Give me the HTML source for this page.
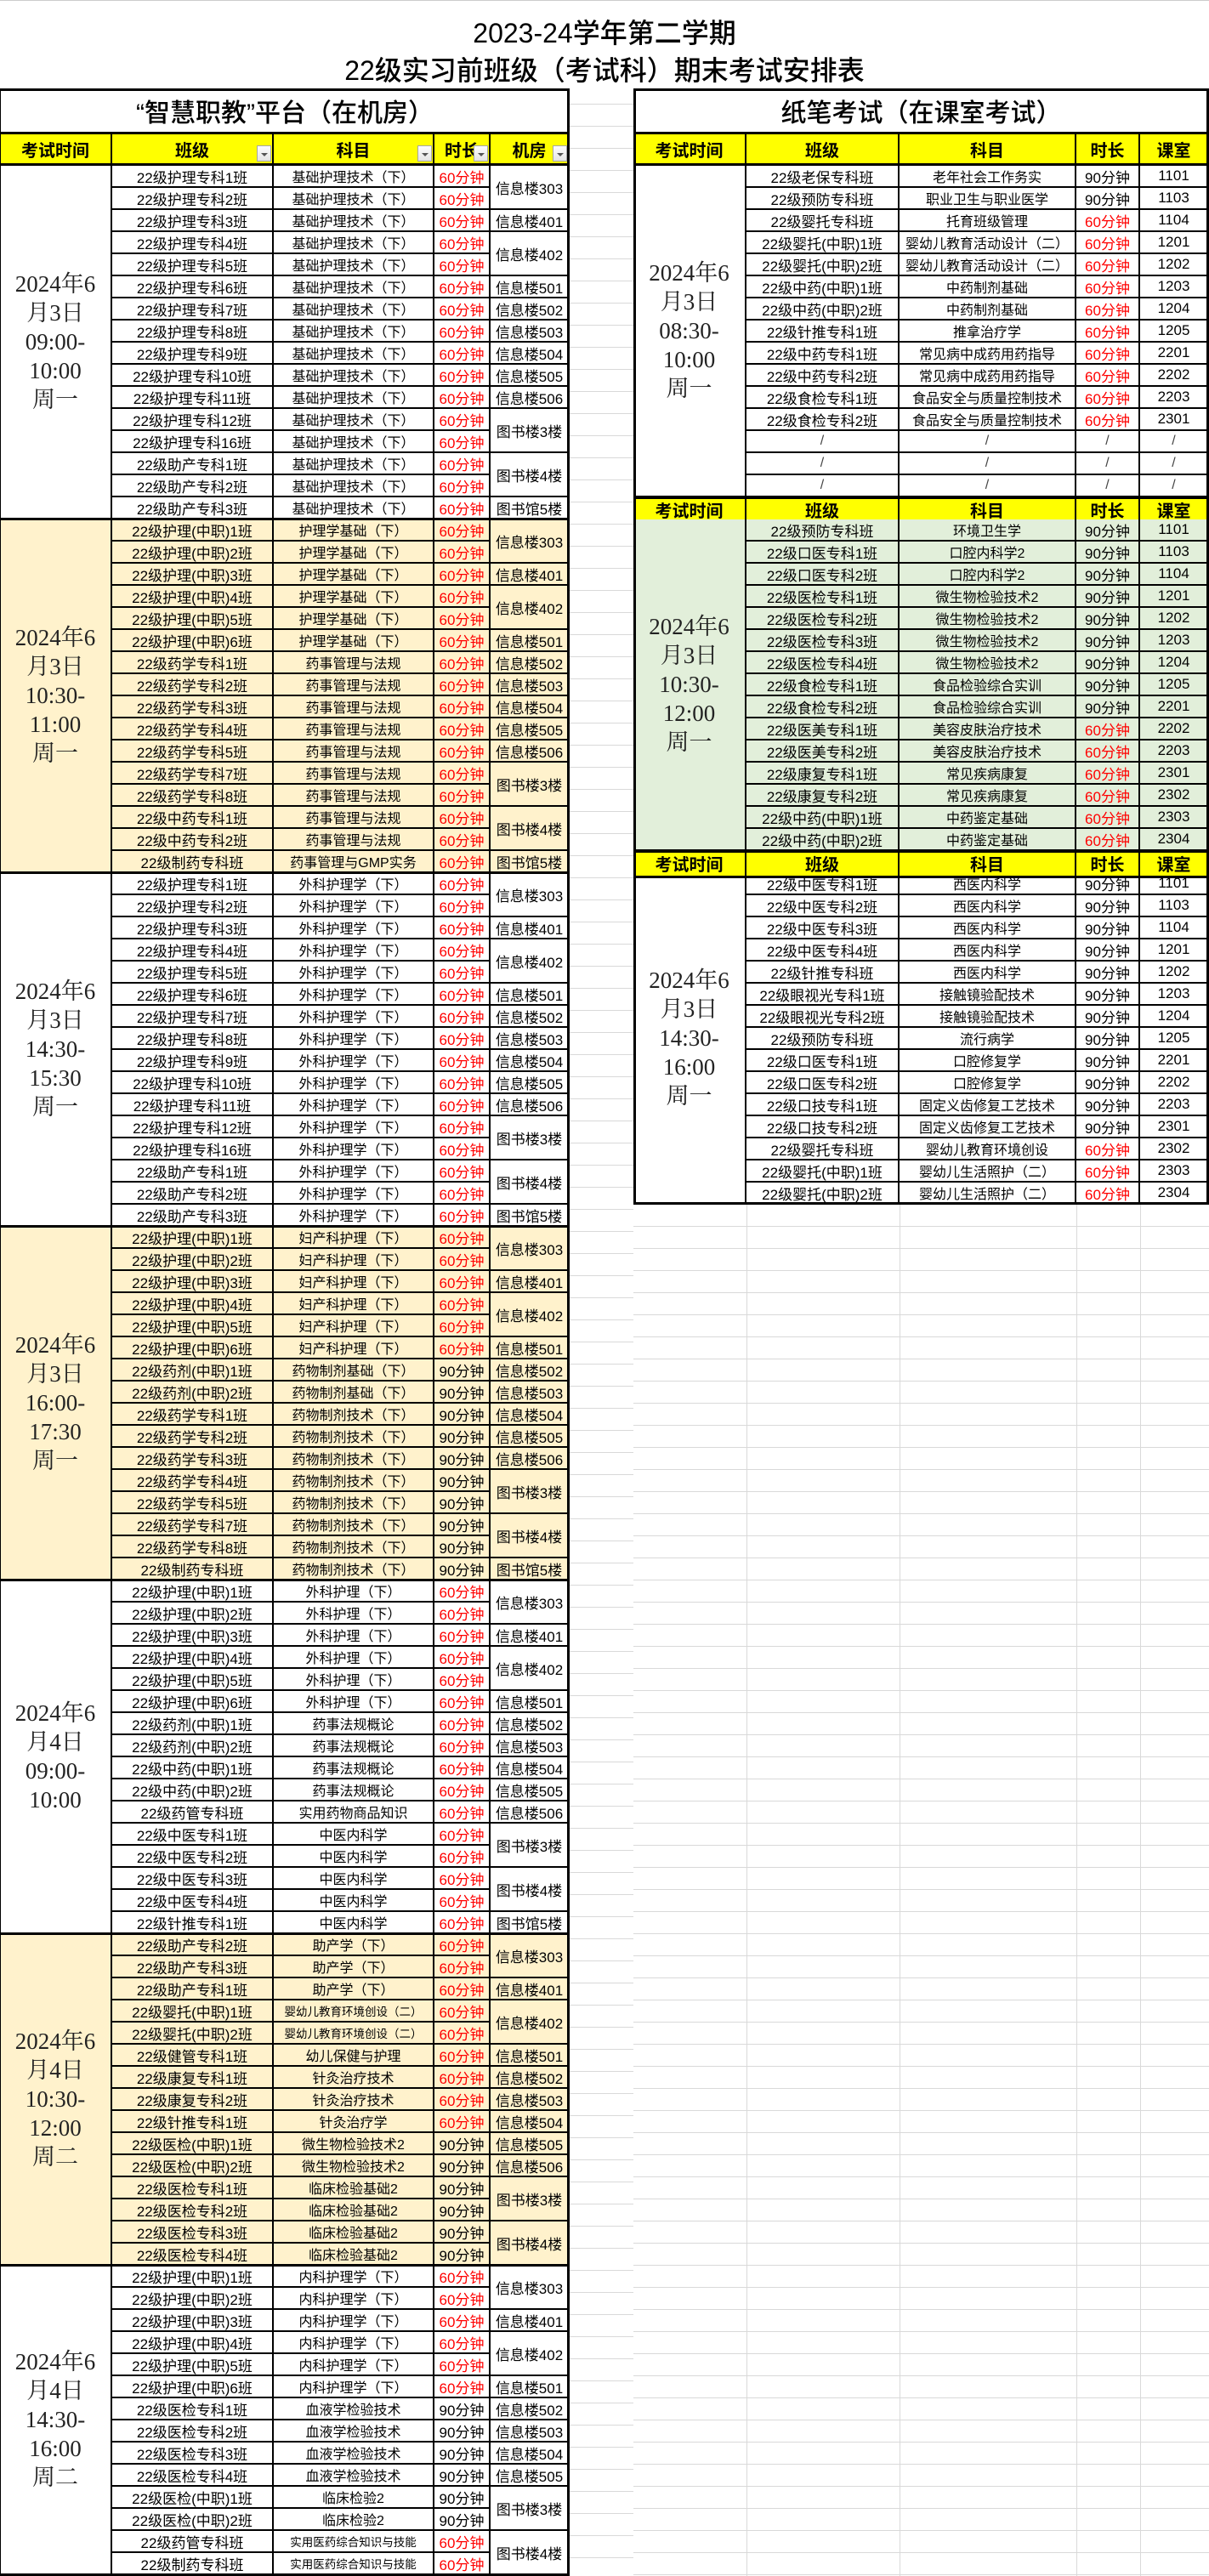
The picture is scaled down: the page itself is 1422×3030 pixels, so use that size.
<!DOCTYPE html>
<html><head><meta charset="utf-8">
<style>
html,body{margin:0;padding:0;}
body{width:1422px;height:3030px;position:relative;overflow:hidden;background:#fff;font-family:"Liberation Sans","Noto Sans CJK SC",sans-serif;color:#000;}
.bgL{position:absolute;left:670px;top:104px;width:75px;height:2926px;background-image:repeating-linear-gradient(to bottom,transparent 0,transparent 25px,#d9d9d9 25px,#d9d9d9 26px);background-position:0 -7px;}
.bgR{position:absolute;left:745px;top:1417px;width:677px;height:1613px;background-image:repeating-linear-gradient(to bottom,transparent 0,transparent 25px,#d9d9d9 25px,#d9d9d9 26px);}
.vl{position:absolute;top:1417px;height:1613px;width:1px;background:#d9d9d9;}
.t1{position:absolute;left:0;width:1422px;text-align:center;font-size:32px;font-weight:500;}
.g{position:absolute;display:grid;grid-auto-rows:26px;}
.L{left:0;width:670px;grid-template-columns:132px 190px 189px 66px 93px;}
.R{left:745px;width:677px;grid-template-columns:133px 180px 208px 75px 81px;}
.g>div{box-sizing:border-box;border-right:2px solid #000;border-bottom:2px solid #000;display:flex;align-items:center;justify-content:center;font-size:17px;white-space:nowrap;overflow:hidden;}
.g>div.s{font-size:16px;}
.g>div.ss{font-size:13.5px;}
.g>div.r{color:#f00;}
.g>div.d{font-family:"Liberation Serif","Noto Serif CJK SC",serif;font-size:27px;line-height:34px;text-align:center;color:#222;}
.g>div.x{color:#444;font-size:16px;}
.s2{grid-row:span 2;}
.c{background:#FFF2CC;}
.gr{background:#E2EFDA;}
.hd{position:absolute;display:grid;height:37px;}
.hd>div{box-sizing:border-box;background:#ff0;border-right:2px solid #000;border-bottom:3px solid #000;display:flex;align-items:center;justify-content:center;font-size:20px;font-weight:bold;position:relative;}
.fb{position:absolute;right:1px;bottom:2px;width:17px;height:19px;box-sizing:border-box;border:1px solid #a6a6a6;background:linear-gradient(#fdfdfd,#e4e4e4);}
.fb::after{content:"";position:absolute;left:4px;top:8px;border-left:4px solid transparent;border-right:4px solid transparent;border-top:4px solid #555;}
.ttl{position:absolute;top:104px;height:54px;box-sizing:border-box;border-bottom:3px solid #000;display:flex;align-items:center;justify-content:center;font-size:30px;font-weight:500;background:#fff;}
.frame{position:absolute;box-sizing:border-box;border:3px solid #000;pointer-events:none;}
.hl{position:absolute;height:3px;background:#000;}
</style></head><body>
<div class="bgL"></div>
<div class="bgR"></div>
<div class="vl" style="left:878px"></div><div class="vl" style="left:1058px"></div><div class="vl" style="left:1266px"></div><div class="vl" style="left:1341px"></div>
<div style="position:absolute;left:0;top:0;width:1422px;height:1px;background:#ccc"></div>

<div class="t1" style="top:14px;">2023-24学年第二学期</div>
<div class="t1" style="top:58px;">22级实习前班级（考试科）期末考试安排表</div>

<!-- LEFT TABLE -->
<div class="ttl" style="left:0;width:670px;">“智慧职教”平台（在机房）</div>
<div class="hd" style="left:0;top:158px;width:670px;grid-template-columns:132px 190px 189px 66px 93px;">
<div>考试时间</div><div>班级<span class="fb"></span></div><div>科目<span class="fb"></span></div><div style="justify-content:flex-start;padding-left:12px">时长<span class="fb"></span></div><div>机房<span class="fb"></span></div>
</div>

<!-- G1 -->
<div class="g L" style="top:195px;">
<div class="d" style="grid-row:span 16"><span>2024年6<br>月3日<br>09:00-<br>10:00<br>周一</span></div>
<div>22级护理专科1班</div><div class="s">基础护理技术（下）</div><div class="r">60分钟</div><div class="s2">信息楼303</div>
<div>22级护理专科2班</div><div class="s">基础护理技术（下）</div><div class="r">60分钟</div>
<div>22级护理专科3班</div><div class="s">基础护理技术（下）</div><div class="r">60分钟</div><div>信息楼401</div>
<div>22级护理专科4班</div><div class="s">基础护理技术（下）</div><div class="r">60分钟</div><div class="s2">信息楼402</div>
<div>22级护理专科5班</div><div class="s">基础护理技术（下）</div><div class="r">60分钟</div>
<div>22级护理专科6班</div><div class="s">基础护理技术（下）</div><div class="r">60分钟</div><div>信息楼501</div>
<div>22级护理专科7班</div><div class="s">基础护理技术（下）</div><div class="r">60分钟</div><div>信息楼502</div>
<div>22级护理专科8班</div><div class="s">基础护理技术（下）</div><div class="r">60分钟</div><div>信息楼503</div>
<div>22级护理专科9班</div><div class="s">基础护理技术（下）</div><div class="r">60分钟</div><div>信息楼504</div>
<div>22级护理专科10班</div><div class="s">基础护理技术（下）</div><div class="r">60分钟</div><div>信息楼505</div>
<div>22级护理专科11班</div><div class="s">基础护理技术（下）</div><div class="r">60分钟</div><div>信息楼506</div>
<div>22级护理专科12班</div><div class="s">基础护理技术（下）</div><div class="r">60分钟</div><div class="s2">图书楼3楼</div>
<div>22级护理专科16班</div><div class="s">基础护理技术（下）</div><div class="r">60分钟</div>
<div>22级助产专科1班</div><div class="s">基础护理技术（下）</div><div class="r">60分钟</div><div class="s2">图书楼4楼</div>
<div>22级助产专科2班</div><div class="s">基础护理技术（下）</div><div class="r">60分钟</div>
<div>22级助产专科3班</div><div class="s">基础护理技术（下）</div><div class="r">60分钟</div><div>图书馆5楼</div>
</div>

<!-- G2 -->
<div class="g L c" style="top:611px;">
<div class="d c" style="grid-row:span 16"><span>2024年6<br>月3日<br>10:30-<br>11:00<br>周一</span></div>
<div>22级护理(中职)1班</div><div class="s">护理学基础（下）</div><div class="r">60分钟</div><div class="s2">信息楼303</div>
<div>22级护理(中职)2班</div><div class="s">护理学基础（下）</div><div class="r">60分钟</div>
<div>22级护理(中职)3班</div><div class="s">护理学基础（下）</div><div class="r">60分钟</div><div>信息楼401</div>
<div>22级护理(中职)4班</div><div class="s">护理学基础（下）</div><div class="r">60分钟</div><div class="s2">信息楼402</div>
<div>22级护理(中职)5班</div><div class="s">护理学基础（下）</div><div class="r">60分钟</div>
<div>22级护理(中职)6班</div><div class="s">护理学基础（下）</div><div class="r">60分钟</div><div>信息楼501</div>
<div>22级药学专科1班</div><div class="s">药事管理与法规</div><div class="r">60分钟</div><div>信息楼502</div>
<div>22级药学专科2班</div><div class="s">药事管理与法规</div><div class="r">60分钟</div><div>信息楼503</div>
<div>22级药学专科3班</div><div class="s">药事管理与法规</div><div class="r">60分钟</div><div>信息楼504</div>
<div>22级药学专科4班</div><div class="s">药事管理与法规</div><div class="r">60分钟</div><div>信息楼505</div>
<div>22级药学专科5班</div><div class="s">药事管理与法规</div><div class="r">60分钟</div><div>信息楼506</div>
<div>22级药学专科7班</div><div class="s">药事管理与法规</div><div class="r">60分钟</div><div class="s2">图书楼3楼</div>
<div>22级药学专科8班</div><div class="s">药事管理与法规</div><div class="r">60分钟</div>
<div>22级中药专科1班</div><div class="s">药事管理与法规</div><div class="r">60分钟</div><div class="s2">图书楼4楼</div>
<div>22级中药专科2班</div><div class="s">药事管理与法规</div><div class="r">60分钟</div>
<div>22级制药专科班</div><div class="s">药事管理与GMP实务</div><div class="r">60分钟</div><div>图书馆5楼</div>
</div>

<!-- G3 -->
<div class="g L" style="top:1027px;">
<div class="d" style="grid-row:span 16"><span>2024年6<br>月3日<br>14:30-<br>15:30<br>周一</span></div>
<div>22级护理专科1班</div><div class="s">外科护理学（下）</div><div class="r">60分钟</div><div class="s2">信息楼303</div>
<div>22级护理专科2班</div><div class="s">外科护理学（下）</div><div class="r">60分钟</div>
<div>22级护理专科3班</div><div class="s">外科护理学（下）</div><div class="r">60分钟</div><div>信息楼401</div>
<div>22级护理专科4班</div><div class="s">外科护理学（下）</div><div class="r">60分钟</div><div class="s2">信息楼402</div>
<div>22级护理专科5班</div><div class="s">外科护理学（下）</div><div class="r">60分钟</div>
<div>22级护理专科6班</div><div class="s">外科护理学（下）</div><div class="r">60分钟</div><div>信息楼501</div>
<div>22级护理专科7班</div><div class="s">外科护理学（下）</div><div class="r">60分钟</div><div>信息楼502</div>
<div>22级护理专科8班</div><div class="s">外科护理学（下）</div><div class="r">60分钟</div><div>信息楼503</div>
<div>22级护理专科9班</div><div class="s">外科护理学（下）</div><div class="r">60分钟</div><div>信息楼504</div>
<div>22级护理专科10班</div><div class="s">外科护理学（下）</div><div class="r">60分钟</div><div>信息楼505</div>
<div>22级护理专科11班</div><div class="s">外科护理学（下）</div><div class="r">60分钟</div><div>信息楼506</div>
<div>22级护理专科12班</div><div class="s">外科护理学（下）</div><div class="r">60分钟</div><div class="s2">图书楼3楼</div>
<div>22级护理专科16班</div><div class="s">外科护理学（下）</div><div class="r">60分钟</div>
<div>22级助产专科1班</div><div class="s">外科护理学（下）</div><div class="r">60分钟</div><div class="s2">图书楼4楼</div>
<div>22级助产专科2班</div><div class="s">外科护理学（下）</div><div class="r">60分钟</div>
<div>22级助产专科3班</div><div class="s">外科护理学（下）</div><div class="r">60分钟</div><div>图书馆5楼</div>
</div>

<!-- G4 -->
<div class="g L c" style="top:1443px;">
<div class="d c" style="grid-row:span 16"><span>2024年6<br>月3日<br>16:00-<br>17:30<br>周一</span></div>
<div>22级护理(中职)1班</div><div class="s">妇产科护理（下）</div><div class="r">60分钟</div><div class="s2">信息楼303</div>
<div>22级护理(中职)2班</div><div class="s">妇产科护理（下）</div><div class="r">60分钟</div>
<div>22级护理(中职)3班</div><div class="s">妇产科护理（下）</div><div class="r">60分钟</div><div>信息楼401</div>
<div>22级护理(中职)4班</div><div class="s">妇产科护理（下）</div><div class="r">60分钟</div><div class="s2">信息楼402</div>
<div>22级护理(中职)5班</div><div class="s">妇产科护理（下）</div><div class="r">60分钟</div>
<div>22级护理(中职)6班</div><div class="s">妇产科护理（下）</div><div class="r">60分钟</div><div>信息楼501</div>
<div>22级药剂(中职)1班</div><div class="s">药物制剂基础（下）</div><div>90分钟</div><div>信息楼502</div>
<div>22级药剂(中职)2班</div><div class="s">药物制剂基础（下）</div><div>90分钟</div><div>信息楼503</div>
<div>22级药学专科1班</div><div class="s">药物制剂技术（下）</div><div>90分钟</div><div>信息楼504</div>
<div>22级药学专科2班</div><div class="s">药物制剂技术（下）</div><div>90分钟</div><div>信息楼505</div>
<div>22级药学专科3班</div><div class="s">药物制剂技术（下）</div><div>90分钟</div><div>信息楼506</div>
<div>22级药学专科4班</div><div class="s">药物制剂技术（下）</div><div>90分钟</div><div class="s2">图书楼3楼</div>
<div>22级药学专科5班</div><div class="s">药物制剂技术（下）</div><div>90分钟</div>
<div>22级药学专科7班</div><div class="s">药物制剂技术（下）</div><div>90分钟</div><div class="s2">图书楼4楼</div>
<div>22级药学专科8班</div><div class="s">药物制剂技术（下）</div><div>90分钟</div>
<div>22级制药专科班</div><div class="s">药物制剂技术（下）</div><div>90分钟</div><div>图书馆5楼</div>
</div>

<!-- G5 -->
<div class="g L" style="top:1859px;">
<div class="d" style="grid-row:span 16"><span>2024年6<br>月4日<br>09:00-<br>10:00</span></div>
<div>22级护理(中职)1班</div><div class="s">外科护理（下）</div><div class="r">60分钟</div><div class="s2">信息楼303</div>
<div>22级护理(中职)2班</div><div class="s">外科护理（下）</div><div class="r">60分钟</div>
<div>22级护理(中职)3班</div><div class="s">外科护理（下）</div><div class="r">60分钟</div><div>信息楼401</div>
<div>22级护理(中职)4班</div><div class="s">外科护理（下）</div><div class="r">60分钟</div><div class="s2">信息楼402</div>
<div>22级护理(中职)5班</div><div class="s">外科护理（下）</div><div class="r">60分钟</div>
<div>22级护理(中职)6班</div><div class="s">外科护理（下）</div><div class="r">60分钟</div><div>信息楼501</div>
<div>22级药剂(中职)1班</div><div class="s">药事法规概论</div><div class="r">60分钟</div><div>信息楼502</div>
<div>22级药剂(中职)2班</div><div class="s">药事法规概论</div><div class="r">60分钟</div><div>信息楼503</div>
<div>22级中药(中职)1班</div><div class="s">药事法规概论</div><div class="r">60分钟</div><div>信息楼504</div>
<div>22级中药(中职)2班</div><div class="s">药事法规概论</div><div class="r">60分钟</div><div>信息楼505</div>
<div>22级药管专科班</div><div class="s">实用药物商品知识</div><div class="r">60分钟</div><div>信息楼506</div>
<div>22级中医专科1班</div><div class="s">中医内科学</div><div class="r">60分钟</div><div class="s2">图书楼3楼</div>
<div>22级中医专科2班</div><div class="s">中医内科学</div><div class="r">60分钟</div>
<div>22级中医专科3班</div><div class="s">中医内科学</div><div class="r">60分钟</div><div class="s2">图书楼4楼</div>
<div>22级中医专科4班</div><div class="s">中医内科学</div><div class="r">60分钟</div>
<div>22级针推专科1班</div><div class="s">中医内科学</div><div class="r">60分钟</div><div>图书馆5楼</div>
</div>

<!-- G6 -->
<div class="g L c" style="top:2275px;">
<div class="d c" style="grid-row:span 15"><span>2024年6<br>月4日<br>10:30-<br>12:00<br>周二</span></div>
<div>22级助产专科2班</div><div class="s">助产学（下）</div><div class="r">60分钟</div><div class="s2">信息楼303</div>
<div>22级助产专科3班</div><div class="s">助产学（下）</div><div class="r">60分钟</div>
<div>22级助产专科1班</div><div class="s">助产学（下）</div><div class="r">60分钟</div><div>信息楼401</div>
<div>22级婴托(中职)1班</div><div class="ss">婴幼儿教育环境创设（二）</div><div class="r">60分钟</div><div class="s2">信息楼402</div>
<div>22级婴托(中职)2班</div><div class="ss">婴幼儿教育环境创设（二）</div><div class="r">60分钟</div>
<div>22级健管专科1班</div><div class="s">幼儿保健与护理</div><div class="r">60分钟</div><div>信息楼501</div>
<div>22级康复专科1班</div><div class="s">针灸治疗技术</div><div class="r">60分钟</div><div>信息楼502</div>
<div>22级康复专科2班</div><div class="s">针灸治疗技术</div><div class="r">60分钟</div><div>信息楼503</div>
<div>22级针推专科1班</div><div class="s">针灸治疗学</div><div class="r">60分钟</div><div>信息楼504</div>
<div>22级医检(中职)1班</div><div class="s">微生物检验技术2</div><div>90分钟</div><div>信息楼505</div>
<div>22级医检(中职)2班</div><div class="s">微生物检验技术2</div><div>90分钟</div><div>信息楼506</div>
<div>22级医检专科1班</div><div class="s">临床检验基础2</div><div>90分钟</div><div class="s2">图书楼3楼</div>
<div>22级医检专科2班</div><div class="s">临床检验基础2</div><div>90分钟</div>
<div>22级医检专科3班</div><div class="s">临床检验基础2</div><div>90分钟</div><div class="s2">图书楼4楼</div>
<div>22级医检专科4班</div><div class="s">临床检验基础2</div><div>90分钟</div>
</div>

<!-- G7 -->
<div class="g L" style="top:2665px;">
<div class="d" style="grid-row:span 14"><span>2024年6<br>月4日<br>14:30-<br>16:00<br>周二</span></div>
<div>22级护理(中职)1班</div><div class="s">内科护理学（下）</div><div class="r">60分钟</div><div class="s2">信息楼303</div>
<div>22级护理(中职)2班</div><div class="s">内科护理学（下）</div><div class="r">60分钟</div>
<div>22级护理(中职)3班</div><div class="s">内科护理学（下）</div><div class="r">60分钟</div><div>信息楼401</div>
<div>22级护理(中职)4班</div><div class="s">内科护理学（下）</div><div class="r">60分钟</div><div class="s2">信息楼402</div>
<div>22级护理(中职)5班</div><div class="s">内科护理学（下）</div><div class="r">60分钟</div>
<div>22级护理(中职)6班</div><div class="s">内科护理学（下）</div><div class="r">60分钟</div><div>信息楼501</div>
<div>22级医检专科1班</div><div class="s">血液学检验技术</div><div>90分钟</div><div>信息楼502</div>
<div>22级医检专科2班</div><div class="s">血液学检验技术</div><div>90分钟</div><div>信息楼503</div>
<div>22级医检专科3班</div><div class="s">血液学检验技术</div><div>90分钟</div><div>信息楼504</div>
<div>22级医检专科4班</div><div class="s">血液学检验技术</div><div>90分钟</div><div>信息楼505</div>
<div>22级医检(中职)1班</div><div class="s">临床检验2</div><div>90分钟</div><div class="s2">图书楼3楼</div>
<div>22级医检(中职)2班</div><div class="s">临床检验2</div><div>90分钟</div>
<div>22级药管专科班</div><div class="ss">实用医药综合知识与技能</div><div class="r">60分钟</div><div class="s2">图书楼4楼</div>
<div>22级制药专科班</div><div class="ss">实用医药综合知识与技能</div><div class="r">60分钟</div>
</div>

<div class="hl" style="left:0;top:609px;width:670px"></div>
<div class="hl" style="left:0;top:1025px;width:670px"></div>
<div class="hl" style="left:0;top:1441px;width:670px"></div>
<div class="hl" style="left:0;top:1857px;width:670px"></div>
<div class="hl" style="left:0;top:2273px;width:670px"></div>
<div class="hl" style="left:0;top:2663px;width:670px"></div>
<div class="frame" style="left:0;top:104px;width:670px;height:2926px;border-left-width:1px"></div>

<!-- RIGHT TABLE -->
<div class="ttl" style="left:745px;width:677px;">纸笔考试（在课室考试）</div>
<div class="hd" style="left:745px;top:158px;width:677px;grid-template-columns:133px 180px 208px 75px 81px;">
<div>考试时间</div><div>班级</div><div>科目</div><div>时长</div><div>课室</div>
</div>

<div class="g R" style="top:195px;">
<div class="d" style="grid-row:span 15"><span>2024年6<br>月3日<br>08:30-<br>10:00<br>周一</span></div>
<div>22级老保专科班</div><div class="s">老年社会工作务实</div><div>90分钟</div><div>1101</div>
<div>22级预防专科班</div><div class="s">职业卫生与职业医学</div><div>90分钟</div><div>1103</div>
<div>22级婴托专科班</div><div class="s">托育班级管理</div><div class="r">60分钟</div><div>1104</div>
<div>22级婴托(中职)1班</div><div class="s">婴幼儿教育活动设计（二）</div><div class="r">60分钟</div><div>1201</div>
<div>22级婴托(中职)2班</div><div class="s">婴幼儿教育活动设计（二）</div><div class="r">60分钟</div><div>1202</div>
<div>22级中药(中职)1班</div><div class="s">中药制剂基础</div><div class="r">60分钟</div><div>1203</div>
<div>22级中药(中职)2班</div><div class="s">中药制剂基础</div><div class="r">60分钟</div><div>1204</div>
<div>22级针推专科1班</div><div class="s">推拿治疗学</div><div class="r">60分钟</div><div>1205</div>
<div>22级中药专科1班</div><div class="s">常见病中成药用药指导</div><div class="r">60分钟</div><div>2201</div>
<div>22级中药专科2班</div><div class="s">常见病中成药用药指导</div><div class="r">60分钟</div><div>2202</div>
<div>22级食检专科1班</div><div class="s">食品安全与质量控制技术</div><div class="r">60分钟</div><div>2203</div>
<div>22级食检专科2班</div><div class="s">食品安全与质量控制技术</div><div class="r">60分钟</div><div>2301</div>
<div class="x">/</div><div class="x">/</div><div class="x">/</div><div class="x">/</div>
<div class="x">/</div><div class="x">/</div><div class="x">/</div><div class="x">/</div>
<div class="x">/</div><div class="x">/</div><div class="x">/</div><div class="x">/</div>
</div>

<div class="hd" style="left:745px;top:585px;height:26px;width:677px;grid-template-columns:133px 180px 208px 75px 81px;">
<div>考试时间</div><div>班级</div><div>科目</div><div>时长</div><div>课室</div>
</div>

<div class="g R gr" style="top:611px;">
<div class="d gr" style="grid-row:span 15"><span>2024年6<br>月3日<br>10:30-<br>12:00<br>周一</span></div>
<div>22级预防专科班</div><div class="s">环境卫生学</div><div>90分钟</div><div>1101</div>
<div>22级口医专科1班</div><div class="s">口腔内科学2</div><div>90分钟</div><div>1103</div>
<div>22级口医专科2班</div><div class="s">口腔内科学2</div><div>90分钟</div><div>1104</div>
<div>22级医检专科1班</div><div class="s">微生物检验技术2</div><div>90分钟</div><div>1201</div>
<div>22级医检专科2班</div><div class="s">微生物检验技术2</div><div>90分钟</div><div>1202</div>
<div>22级医检专科3班</div><div class="s">微生物检验技术2</div><div>90分钟</div><div>1203</div>
<div>22级医检专科4班</div><div class="s">微生物检验技术2</div><div>90分钟</div><div>1204</div>
<div>22级食检专科1班</div><div class="s">食品检验综合实训</div><div>90分钟</div><div>1205</div>
<div>22级食检专科2班</div><div class="s">食品检验综合实训</div><div>90分钟</div><div>2201</div>
<div>22级医美专科1班</div><div class="s">美容皮肤治疗技术</div><div class="r">60分钟</div><div>2202</div>
<div>22级医美专科2班</div><div class="s">美容皮肤治疗技术</div><div class="r">60分钟</div><div>2203</div>
<div>22级康复专科1班</div><div class="s">常见疾病康复</div><div class="r">60分钟</div><div>2301</div>
<div>22级康复专科2班</div><div class="s">常见疾病康复</div><div class="r">60分钟</div><div>2302</div>
<div>22级中药(中职)1班</div><div class="s">中药鉴定基础</div><div class="r">60分钟</div><div>2303</div>
<div>22级中药(中职)2班</div><div class="s">中药鉴定基础</div><div class="r">60分钟</div><div>2304</div>
</div>

<div class="hd" style="left:745px;top:1001px;height:26px;width:677px;grid-template-columns:133px 180px 208px 75px 81px;">
<div>考试时间</div><div>班级</div><div>科目</div><div>时长</div><div>课室</div>
</div>

<div class="g R" style="top:1027px;">
<div class="d" style="grid-row:span 15"><span>2024年6<br>月3日<br>14:30-<br>16:00<br>周一</span></div>
<div>22级中医专科1班</div><div class="s">西医内科学</div><div>90分钟</div><div>1101</div>
<div>22级中医专科2班</div><div class="s">西医内科学</div><div>90分钟</div><div>1103</div>
<div>22级中医专科3班</div><div class="s">西医内科学</div><div>90分钟</div><div>1104</div>
<div>22级中医专科4班</div><div class="s">西医内科学</div><div>90分钟</div><div>1201</div>
<div>22级针推专科班</div><div class="s">西医内科学</div><div>90分钟</div><div>1202</div>
<div>22级眼视光专科1班</div><div class="s">接触镜验配技术</div><div>90分钟</div><div>1203</div>
<div>22级眼视光专科2班</div><div class="s">接触镜验配技术</div><div>90分钟</div><div>1204</div>
<div>22级预防专科班</div><div class="s">流行病学</div><div>90分钟</div><div>1205</div>
<div>22级口医专科1班</div><div class="s">口腔修复学</div><div>90分钟</div><div>2201</div>
<div>22级口医专科2班</div><div class="s">口腔修复学</div><div>90分钟</div><div>2202</div>
<div>22级口技专科1班</div><div class="s">固定义齿修复工艺技术</div><div>90分钟</div><div>2203</div>
<div>22级口技专科2班</div><div class="s">固定义齿修复工艺技术</div><div>90分钟</div><div>2301</div>
<div>22级婴托专科班</div><div class="s">婴幼儿教育环境创设</div><div class="r">60分钟</div><div>2302</div>
<div>22级婴托(中职)1班</div><div class="s">婴幼儿生活照护（二）</div><div class="r">60分钟</div><div>2303</div>
<div>22级婴托(中职)2班</div><div class="s">婴幼儿生活照护（二）</div><div class="r">60分钟</div><div>2304</div>
</div>

<div class="hl" style="left:745px;top:584px;width:677px"></div>
<div class="hl" style="left:745px;top:1000px;width:677px"></div>
<div class="frame" style="left:745px;top:104px;width:677px;height:1313px"></div>
</body></html>
